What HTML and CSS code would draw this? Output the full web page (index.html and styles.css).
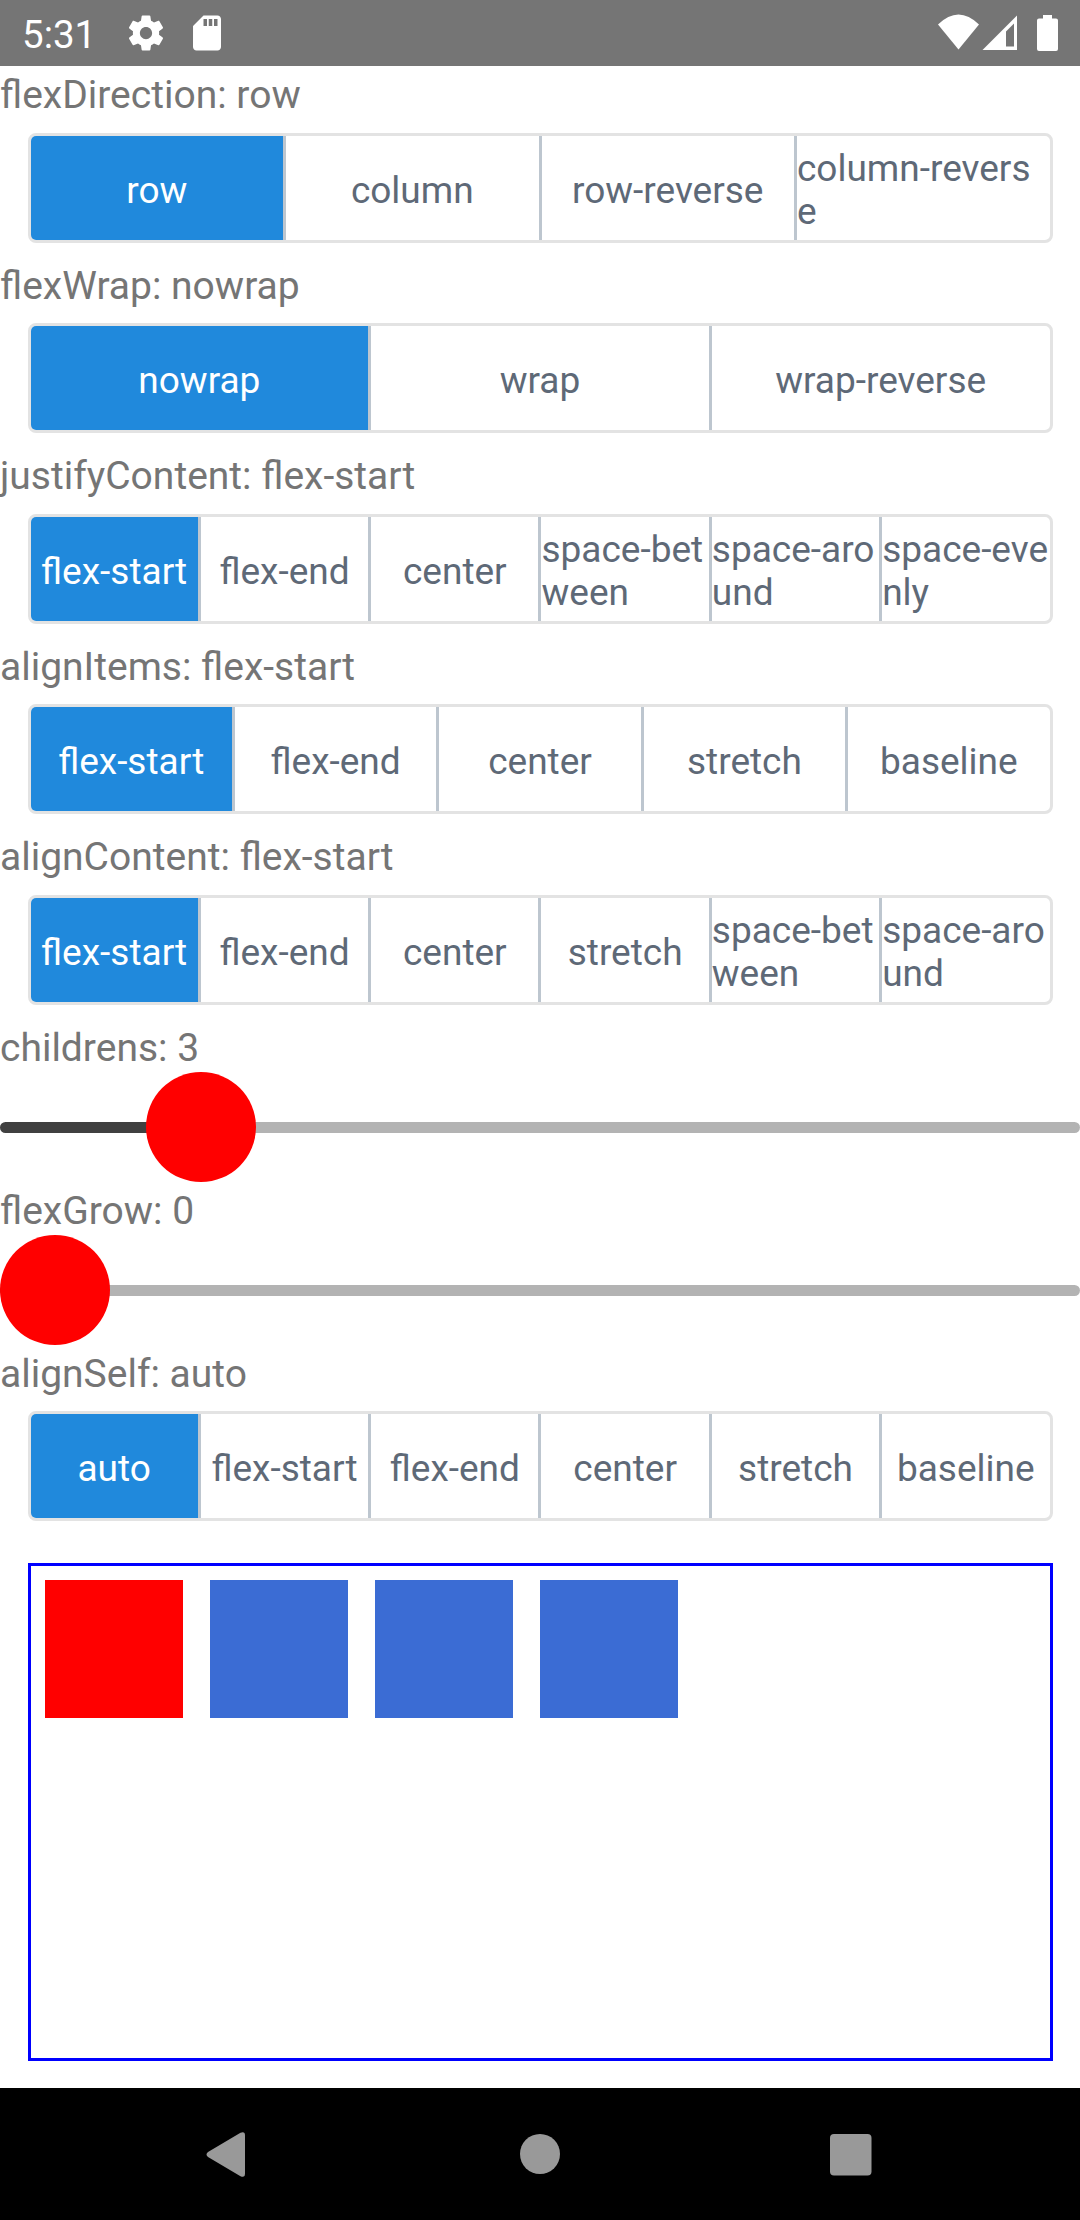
FILE: index.html
```html
<!DOCTYPE html>
<html lang="en">
<head>
<meta charset="utf-8">
<title>Flexbox playground</title>
<link rel="stylesheet" href="styles.css">
</head>
<body>
<header class="status">
  <span class="clock">5:31</span>
  <svg class="gear" width="42" height="42" viewBox="0 0 24 24"><path d="M19.43 12.98c.04-.32.07-.64.07-.98s-.03-.66-.07-.98l2.11-1.65c.19-.15.24-.42.12-.64l-2-3.46c-.12-.22-.39-.3-.61-.22l-2.49 1c-.52-.4-1.08-.73-1.69-.98l-.38-2.65C14.46 2.18 14.25 2 14 2h-4c-.25 0-.46.18-.49.42l-.38 2.65c-.61.25-1.17.59-1.69.98l-2.49-1c-.23-.09-.49 0-.61.22l-2 3.46c-.13.22-.07.49.12.64l2.11 1.65c-.04.32-.07.65-.07.98s.03.66.07.98l-2.11 1.65c-.19.15-.24.42-.12.64l2 3.46c.12.22.39.3.61.22l2.49-1c.52.4 1.08.73 1.69.98l.38 2.65c.03.24.24.42.49.42h4c.25 0 .46-.18.49-.42l.38-2.65c.61-.25 1.17-.59 1.69-.98l2.49 1c.23.09.49 0 .61-.22l2-3.46c.12-.22.07-.49-.12-.64l-2.11-1.65zM12 15.5c-1.93 0-3.5-1.57-3.5-3.5s1.57-3.5 3.5-3.5 3.5 1.57 3.5 3.5-1.57 3.5-3.5 3.5z"/></svg>
  <svg class="card" width="42" height="42" viewBox="0 0 24 24"><path d="M18 2h-8L4.020 8 4 20c0 1.100.9 2 2 2h12c1.100 0 2-.9 2-2V4c0-1.100-.9-2-2-2zm-6 6h-2V4h2v4zm3 0h-2V4h2v4zm3 0h-2V4h2v4z"/></svg>
  <svg class="signals" width="122" height="38" viewBox="0 0 122 38">
    <path d="M0 10.500Q20.500-9.500 41 10.500L20.500 35.500z"/>
    <path fill-rule="evenodd" d="M44.500 36 79 1.500V36zM68 17.500V32.500H76V9.500z"/>
    <path d="M105 1h9v3.500h4a2 2 0 0 1 2 2V35a2 2 0 0 1-2 2h-17a2 2 0 0 1-2-2V6.500a2 2 0 0 1 2-2h4z"/>
  </svg>
</header>

<main class="screen">
  <p class="label">flexDirection: row</p>
  <div class="group">
    <div class="seg on"><span>row</span></div><div class="seg"><span>column</span></div><div class="seg"><span>row-reverse</span></div><div class="seg"><span>column-reverse</span></div>
  </div>
  <p class="label">flexWrap: nowrap</p>
  <div class="group">
    <div class="seg on"><span>nowrap</span></div><div class="seg"><span>wrap</span></div><div class="seg"><span>wrap-reverse</span></div>
  </div>
  <p class="label">justifyContent: flex-start</p>
  <div class="group">
    <div class="seg on"><span>flex-start</span></div><div class="seg"><span>flex-end</span></div><div class="seg"><span>center</span></div><div class="seg"><span>space-between</span></div><div class="seg"><span>space-around</span></div><div class="seg"><span>space-evenly</span></div>
  </div>
  <p class="label">alignItems: flex-start</p>
  <div class="group">
    <div class="seg on"><span>flex-start</span></div><div class="seg"><span>flex-end</span></div><div class="seg"><span>center</span></div><div class="seg"><span>stretch</span></div><div class="seg"><span>baseline</span></div>
  </div>
  <p class="label">alignContent: flex-start</p>
  <div class="group">
    <div class="seg on"><span>flex-start</span></div><div class="seg"><span>flex-end</span></div><div class="seg"><span>center</span></div><div class="seg"><span>stretch</span></div><div class="seg"><span>space-between</span></div><div class="seg"><span>space-around</span></div>
  </div>
  <p class="label">childrens: 3</p>
  <div class="slider"><div class="fill" style="width:145.5px"></div><div class="thumb"></div><div class="rest"></div></div>
  <p class="label">flexGrow: 0</p>
  <div class="slider"><div class="fill" style="width:0"></div><div class="thumb"></div><div class="rest"></div></div>
  <p class="label">alignSelf: auto</p>
  <div class="group">
    <div class="seg on"><span>auto</span></div><div class="seg"><span>flex-start</span></div><div class="seg"><span>flex-end</span></div><div class="seg"><span>center</span></div><div class="seg"><span>stretch</span></div><div class="seg"><span>baseline</span></div>
  </div>
  <div class="canvas">
    <div class="box first"></div><div class="box"></div><div class="box"></div><div class="box"></div>
  </div>
</main>

<nav class="nav">
  <svg width="1080" height="132" viewBox="0 0 1080 132">
    <path d="M208 64 240.500 44.800Q245 43 245 47.500V85.500Q245 90 240.500 88.200L208 69Q205 66.500 208 64z"/>
    <circle cx="540" cy="66" r="20"/>
    <rect x="830" y="46" width="41.500" height="41.500" rx="4"/>
  </svg>
</nav>
</body>
</html>
```
FILE: styles.css
```css
* { box-sizing: border-box; }
body {
  margin: 0;
  width: 1080px;
  height: 2220px;
  display: flex;
  flex-direction: column;
  background: #fff;
  font-family: Roboto, sans-serif;
  overflow: hidden;
}
svg { display: block; flex: none; }
.status {
  flex: none;
  height: 66px;
  display: flex;
  align-items: center;
  background: #757575;
  color: #fff;
  fill: #fff;
}
.clock {
  width: 103px;
  padding: 4px 0 0 22px;
  font-size: 38.5px;
  line-height: 46px;
}
.gear { margin-left: 22px; }
.card { margin-left: 19px; }
.signals { margin: 0 20px 0 auto; }

.screen {
  flex: 1;
  min-height: 0;
  display: flex;
  flex-direction: column;
}
.label {
  flex: none;
  height: 53px;
  margin: 0;
  padding-top: 5px;
  font-size: 39px;
  line-height: 49px;
  color: #757575;
  white-space: nowrap;
}
.group {
  flex: none;
  display: flex;
  height: 110px;
  margin: 13.75px 27.5px;
  border: 3px solid #e3e3e3;
  border-radius: 8px;
  overflow: hidden;
}
.seg {
  box-sizing: content-box;
  flex: 1 1 0;
  min-width: 0;
  display: flex;
  align-items: center;
  justify-content: center;
  padding-top: 5px;
  border-right: 3px solid #bdc6cf;
  font-size: 37px;
  line-height: 43px;
  color: #5e6977;
}
.seg:last-child { border-right: 0; }
.seg span { min-width: 0; word-break: break-all; }
.on { background: #2089dc; color: #fff; }

.slider {
  flex: none;
  display: flex;
  align-items: center;
  height: 110px;
}
.fill,
.rest {
  height: 11px;
  margin-top: 1px;
}
.fill {
  flex: none;
  box-sizing: content-box;
  margin-right: -10px;
  padding-right: 10px;
  background: #404040;
  border-radius: 5.5px 0 0 5.5px;
}
.rest {
  flex: 1;
  margin-left: -10px;
  background: #b3b3b3;
  border-radius: 0 5.5px 5.5px 0;
}
.thumb { flex: none; z-index: 1; width: 110px; height: 110px; border-radius: 50%; background: #f00; }

.canvas {
  flex: 1;
  display: flex;
  align-items: flex-start;
  gap: 27px;
  margin: 27.5px;
  padding: 14px;
  border: 3px solid #00f;
}
.box { flex: none; width: 138px; height: 138px; background: #3b6cd4; }
.first { background: #f00; }

.nav { flex: none; height: 132px; background: #000; fill: #999; }
```
